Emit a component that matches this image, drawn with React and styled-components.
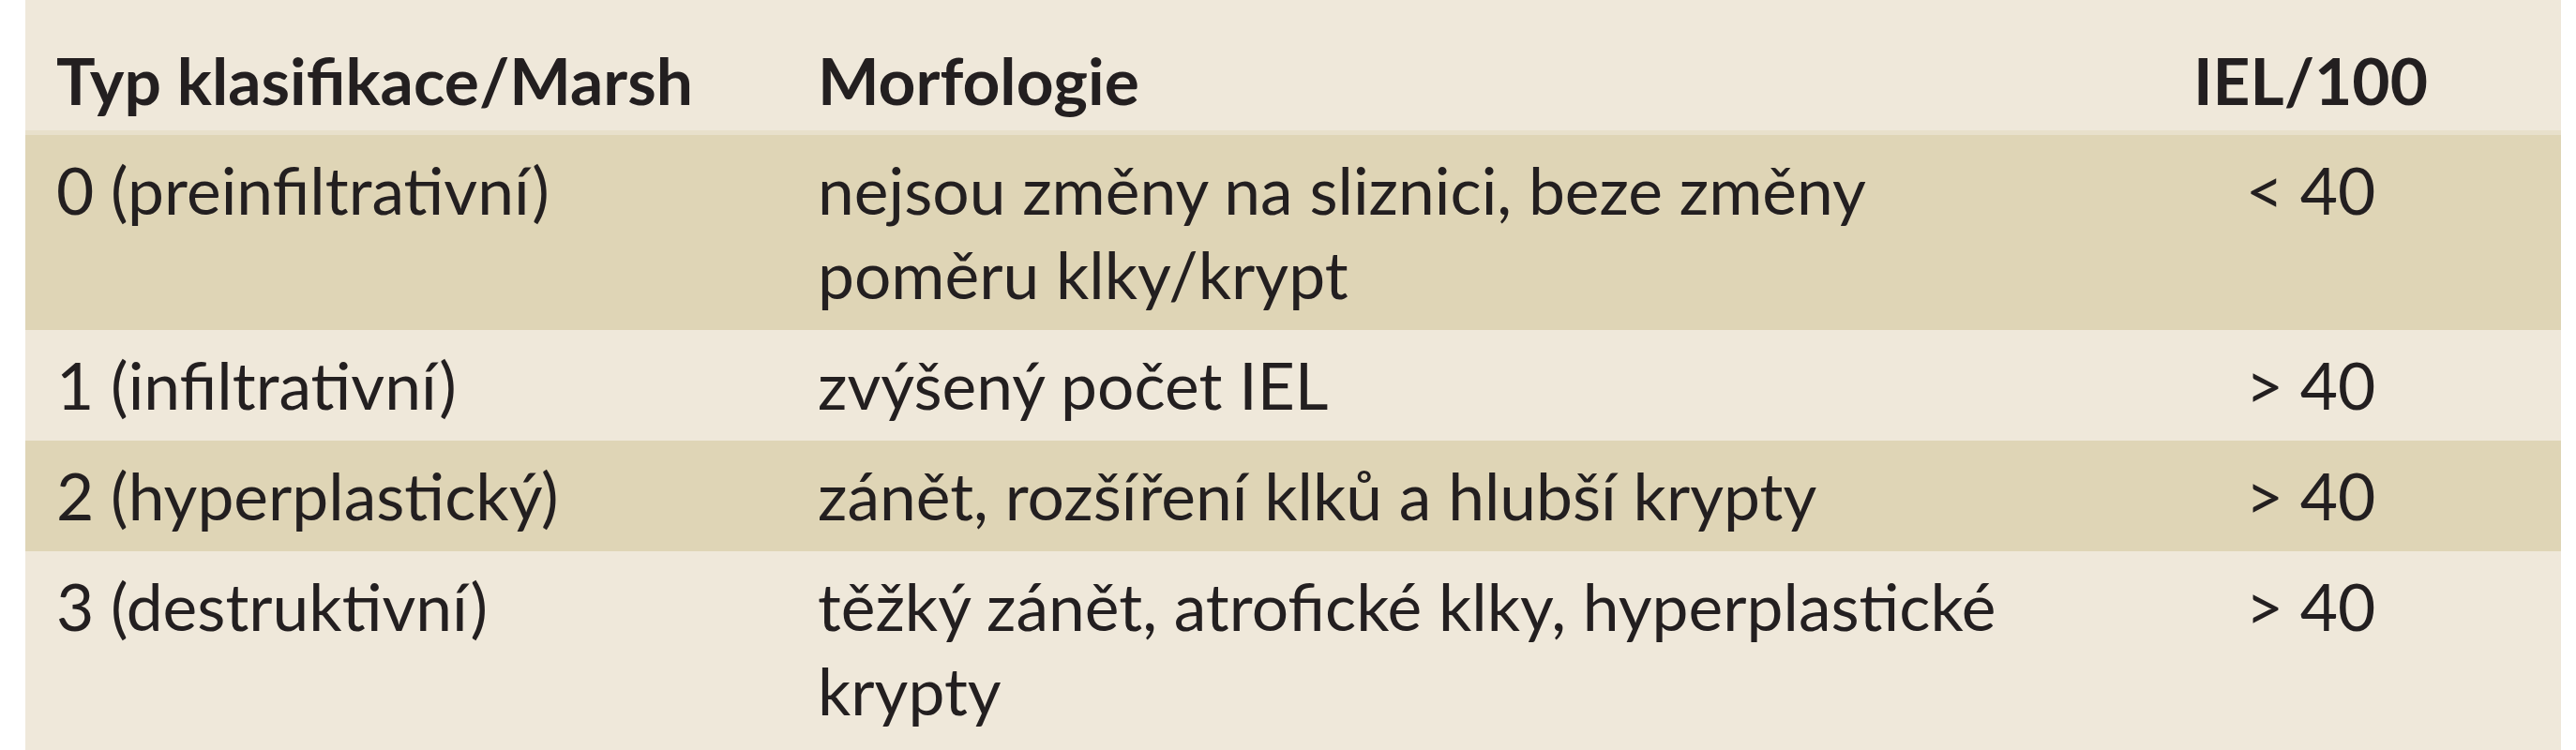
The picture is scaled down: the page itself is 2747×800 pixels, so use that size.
import React from 'react';
import styled, { createGlobalStyle } from 'styled-components';

const GlobalStyle = createGlobalStyle`
  body {
    margin: 0;
    background: #ffffff;
    font-family: "Lato", "Liberation Sans", sans-serif;
    color: #231f20;
  }
`;

const rows = [
  { type: '0 (preinfiltrativní)', morph: 'nejsou změny na sliznici, beze změny poměru klky/krypt', iel: '< 40', shaded: true },
  { type: '1 (infiltrativní)', morph: 'zvýšený počet IEL', iel: '> 40' },
  { type: '2 (hyperplastický)', morph: 'zánět, rozšíření klků a hlubší krypty', iel: '> 40', shaded: true },
  { type: '3 (destruktivní)', morph: 'těžký zánět, atrofické klky, hyperplastické krypty', iel: '> 40' },
];

const App = () => {
  return (
    <>
      <GlobalStyle />
      <Table>
        <HeadRow>
          <HeadCell>Typ klasifikace/Marsh</HeadCell>
          <HeadCell>Morfologie</HeadCell>
          <HeadCell $center>IEL/100</HeadCell>
        </HeadRow>
        {rows.map((r) => (
          <Row key={r.type} $shaded={r.shaded}>
            <Cell>{r.type}</Cell>
            <Cell>{r.morph}</Cell>
            <Cell $center>{r.iel}</Cell>
          </Row>
        ))}
      </Table>
    </>
  );
};

export default App;

const Table = styled.div`
  margin-left: 27px;
  width: 2704px;
  height: 800px;
  background: #efe8da;
  overflow: hidden;
`;

const HeadRow = styled.div`
  display: grid;
  grid-template-columns: 812px 1358px 1fr;
  background: #efe8da;
  border-bottom: 5px solid #e8e0cb;
`;

const Row = styled.div`
  display: grid;
  grid-template-columns: 812px 1358px 1fr;
  background: ${(p) => (p.$shaded ? '#dfd5b6' : '#efe8da')};
`;

const HeadCell = styled.div`
  padding: 40px 33px 9px;
  font-size: 69.5px;
  line-height: 90px;
  font-weight: 700;
  text-align: ${(p) => (p.$center ? 'center' : 'left')};
`;

const Cell = styled.div`
  padding: 13px 33px 15px;
  font-size: 69.5px;
  line-height: 90px;
  font-weight: 400;
  text-align: ${(p) => (p.$center ? 'center' : 'left')};
`;
